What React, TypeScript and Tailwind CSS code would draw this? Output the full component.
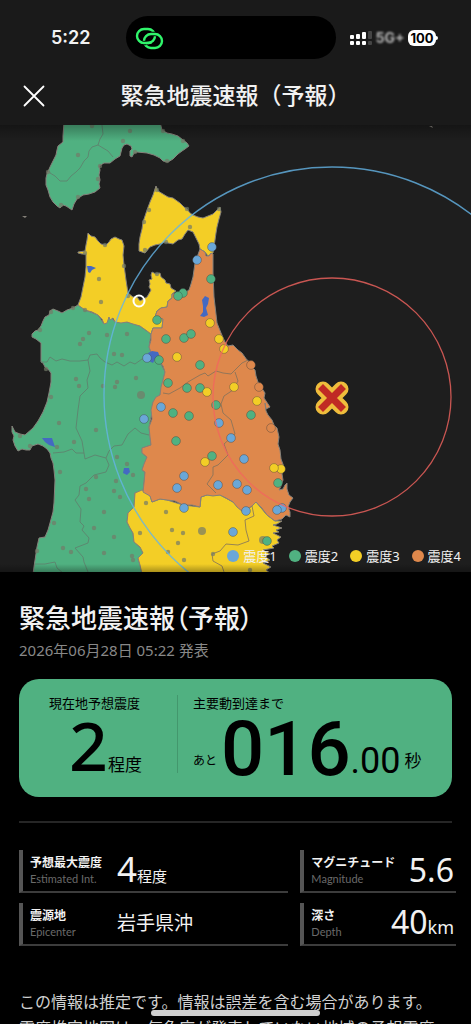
import * as React from "react"
import { clsx } from "clsx"

type Point = [number, number]

const COLORS = {
  one: "#6aa7d8",
  two: "#50b181",
  three: "#f3ce26",
  four: "#de884c",
}

const LEGEND = [
  { label: "震度1", dot: "bg-[#6aa7d8]" },
  { label: "震度2", dot: "bg-[#50b181]" },
  { label: "震度3", dot: "bg-[#f3ce26]" },
  { label: "震度4", dot: "bg-[#de884c]" },
]

// Coordinates share one space: x 0-471, y 125-572
const HOKKAIDO =
  "M64 122L63 136L63 142L58 146L57 150L56 155L53 161L50 167L47 174L46 178L46 185L48 190L50 197L53 202L57 206L60 208L63 205L66 206L69 208L72 210L74 204L77 199L83 195L89 194L95 192L100 188L99 184L100 180L99 175L100 170L99 166L104 163L110 163L115 159L120 156L121 152L122 148L124 145L127 144L131 146L132 149L130 151L130 156L132 157L134 153L137 152L147 153L154 155L160 158L163 161L168 162L173 159L178 154L182 151L185 149L189 146L187 143L183 140L178 136L172 134L167 133L162 130L160 122Z"
const AKITA_YAMAGATA =
  "M32 334L35 331L38 330L41 326L43 321L45 317L49 315L50 311L53 309L58 311L62 313L67 310L73 308L78 305L85 310L98 315L104 324L110 317L115 322L127 322L140 326L151 334L149 347L152 355L160 362L165 372L163 380L160 395L153 402L152 412L149 427L151 445L142 448L142 453L147 457L142 470L145 472L143 492L135 493L134 507L128 513L127 522L130 528L133 533L134 542L140 547L143 553L138 558L140 565L142 574L33 574L34 567L37 547L39 538L45 537L48 530L50 523L53 512L54 503L55 480L54 470L53 463L51 458L50 453L47 449L43 446L38 444L32 446L30 450L26 450L22 449L18 451L15 446L13 440L14 436L12 432L12 426L15 432L20 434L25 435L33 428L38 421L43 412L47 402L49 393L51 382L51 373L48 369L45 367L43 363L41 362L41 352L41 343L36 339L32 337Z"
const TSUGARU =
  "M78 305L81 297L83 287L85 277L86 267L86 254L82 254L78 253L78 252L85 251L86 245L87 240L88 233L91 236L95 237L98 241L101 244L106 245L109 242L111 239L115 237L119 239L122 240L124 246L123 255L124 265L126 280L128 293L133 297L137 297L140 301L147 297L151 290L149 287L150 284L149 280L152 279L151 275L152 272L156 274L160 273L161 277L165 280L166 283L170 284L171 288L176 291L172 294L172 298L168 301L167 307L161 308L157 311L155 317L163 319L162 328L153 328L151 334L147 331L140 326L133 324L127 322L121 323L115 322L113 318L110 320L109 317L107 323L104 324L102 319L98 315L92 312L85 310Z"
const SHIMOKITA =
  "M156 186L158 191L163 194L168 197L173 198L180 203L184 207L187 209L190 213L193 215L198 217L203 218L208 216L213 214L217 210L220 207L221 212L219 219L217 227L216 233L215 240L213 253L208 256L205 252L200 249L199 244L197 240L195 236L193 232L188 230L185 234L182 239L178 240L173 244L168 243L165 242L160 244L155 245L150 247L145 253L139 251L139 244L140 237L142 229L143 222L145 216L147 210L150 202L153 195Z"
const IWATE =
  "M200 249L205 252L206 256L209 256L211 253L213 254L213 273L214 297L217 323L221 333L225 342L228 346L233 345L238 350L242 353L247 360L250 362L252 367L255 370L256 376L258 382L263 390L265 393L264 398L270 407L266 409L265 403L266 411L268 415L272 420L274 425L277 428L279 437L278 444L280 450L281 459L284 467L282 474L283 480L281 486L279 490L283 489L285 485L287 483L287 489L289 495L293 498L290 502L288 507L290 512L290 517L286 515L282 519L275 521L267 515L261 507L256 502L252 506L249 508L243 512L237 507L233 502L226 498L220 495L213 496L207 495L201 497L200 507L192 505L183 505L175 501L167 500L160 499L152 502L150 496L143 492L144 483L145 472L142 470L144 464L147 457L142 453L142 448L151 445L150 437L149 427L152 419L151 410L153 402L156 397L160 395L161 387L163 380L165 372L163 366L160 362L157 357L152 355L149 347L151 340L151 334L153 328L162 328L163 319L155 317L157 311L161 308L167 307L168 301L172 298L172 294L177 293L183 294L189 290L191 284L193 277L195 263Z"
const MIYAGI =
  "M142 490L146 492L149 492L152 502L160 499L167 500L183 505L200 507L201 497L207 495L220 495L233 502L243 512L252 506L256 502L267 515L275 521L282 521L277 524L273 525L282 528L276 530L279 532L273 533L281 537L277 540L279 543L272 546L274 548L263 550L270 554L264 556L270 560L263 563L271 567L266 570L271 574L142 574L140 565L138 558L143 553L140 547L134 542L133 533L130 528L127 522L128 513L134 507L135 493Z"

const BORDERS = [
  "M102 125L103 134L100 139L98 145L92 147L89 151L88 157L84 161L80 168L76 172L71 176L67 181L60 181L55 176L50 173L49 171",
  "M98 145L103 148L108 151L113 157",
  "M41 362L47 362L50 357L56 361L62 359L70 361L80 361L88 360L90 355L97 354L100 358L105 362L112 365L117 362L124 366L130 362L135 364L142 359L149 358",
  "M88 360L90 371L87 380L88 388L80 396L78 410L76 428L82 441L85 459L95 455L106 458L109 451L114 446L122 445L128 434L135 428L141 433L149 435",
  "M53 453L64 452L72 449L76 453L84 453",
  "M106 458L109 465L106 472L94 475L86 483L80 486L79 495L75 500L81 509L80 522L84 526L82 530L89 538L88 543L75 548L83 557L84 562L88 572",
  "M34 564L45 564L55 562L57 568L63 573",
]

const INLAND_BORDERS = [
  "M163 393L169 394L180 388L188 382L200 375L205 373L208 376L216 371L223 373L231 374L235 370L242 363L248 360",
  "M235 372L238 381L233 390L224 396L221 404L223 413L231 420L235 434L224 444L228 455L218 465L213 467L213 475L207 484L216 493",
  "M252 506L254 516L245 520L246 530L249 541L238 545L226 544L220 551L212 554L213 561L222 566L224 572",
]

const LAKES = [
  "M205 296L209 298L208 304L206 308L208 315L204 317L200 316L203 312L203 306L202 300Z",
  "M87 266L91 266L96 268L92 270L90 273L88 272Z",
  "M148 353L152 351L158 352L160 357L155 359L153 363L149 361Z",
  "M42 438L52 438L55 447L49 445L45 442Z",
  "M124 468L129 468L130 472L127 475L123 473Z",
]

const STATIONS: { fill: string; points: Point[] }[] = [
  {
    fill: COLORS.two,
    points: [
      [211, 279], [183, 293], [178, 296], [157, 320], [166, 339], [184, 338], [191, 334],
      [159, 360], [200, 365], [168, 383], [187, 388], [200, 388], [216, 405], [173, 413],
      [189, 416], [176, 441], [212, 456], [251, 415], [278, 483], [267, 541],
    ],
  },
  {
    fill: COLORS.one,
    points: [
      [212, 247], [197, 260], [147, 358], [161, 407], [144, 419], [219, 423], [231, 438],
      [244, 459], [184, 476], [177, 488], [218, 485], [237, 484], [247, 490], [184, 508],
      [246, 511], [282, 508], [277, 510], [233, 532],
    ],
  },
  {
    fill: COLORS.three,
    points: [
      [210, 323], [219, 339], [224, 349], [177, 357], [207, 392], [234, 387], [257, 401],
      [205, 462], [281, 469], [274, 468],
    ],
  },
  { fill: COLORS.four, points: [[251, 365], [259, 387], [271, 428]] },
]

const QUIET_STATIONS: Point[] = [
  [92, 126], [130, 131], [123, 141], [78, 155], [48, 172], [100, 166], [98, 179], [78, 197],
  [61, 205], [163, 131], [183, 141], [135, 152], [167, 161], [149, 210], [144, 222],
  [187, 209], [190, 227], [166, 242], [145, 250], [157, 190], [219, 209], [105, 245],
  [85, 253], [124, 266], [99, 279], [101, 302], [128, 296], [157, 274], [85, 310],
  [73, 308], [51, 312], [40, 330], [89, 333], [83, 339], [80, 344], [107, 335], [127, 334],
  [114, 354], [122, 355], [76, 379], [79, 386], [117, 382], [115, 387], [103, 386],
  [136, 378], [51, 397], [59, 423], [96, 430], [74, 442], [57, 447], [20, 436], [30, 446],
  [117, 457], [127, 464], [133, 475], [116, 481], [60, 472], [96, 477], [86, 489], [89, 499],
  [114, 491], [120, 497], [104, 512], [54, 523], [94, 528], [114, 537], [63, 548], [71, 552],
  [104, 553], [132, 556], [133, 560], [146, 503], [166, 512], [172, 530], [183, 533],
  [178, 543], [140, 533], [168, 552], [184, 560], [37, 551], [46, 369], [213, 554], [250, 570],
]

function Region({ d, fill }: { d: string; fill: string }) {
  return <path d={d} fill={fill} stroke="#85817a" strokeWidth="1" strokeLinejoin="round" />
}

function QuakeMap() {
  return (
    <svg
      role="img"
      aria-label="震度分布"
      viewBox="0 125 471 447"
      className="block w-full bg-[#1e1e1e]"
    >
      <defs>
        <linearGradient id="top-shade" x1="0" y1="0" x2="0" y2="1">
          <stop offset="0" stopColor="#000" stopOpacity="0.3" />
          <stop offset="1" stopColor="#000" stopOpacity="0" />
        </linearGradient>
      </defs>
      <Region d={HOKKAIDO} fill={COLORS.two} />
      <Region d={AKITA_YAMAGATA} fill={COLORS.two} />
      <Region d={TSUGARU} fill={COLORS.three} />
      <Region d={SHIMOKITA} fill={COLORS.three} />
      <Region d={MIYAGI} fill={COLORS.three} />
      <Region d={IWATE} fill={COLORS.four} />
      <path d="M22 216h5l-2 2z M429 126l3 0l1 2z" fill="#85817a" />

      <g fill="none" strokeLinejoin="round" strokeWidth="0.8">
        {BORDERS.map((d) => (
          <path key={d} d={d} stroke="#5f7d6c" />
        ))}
        {INLAND_BORDERS.map((d) => (
          <path key={d} d={d} stroke="#80715c" />
        ))}
      </g>
      {LAKES.map((d) => (
        <path key={d} d={d} fill="#4469c2" />
      ))}

      <g fill="#747b68" fillOpacity="0.7">
        {QUIET_STATIONS.map(([x, y]) => (
          <circle key={`${x}-${y}`} cx={x} cy={y} r="2.2" />
        ))}
        <circle cx="141" cy="395" r="4" />
        <circle cx="202" cy="531" r="4" />
        <circle cx="263" cy="540" r="4" />
      </g>
      {STATIONS.map(({ fill, points }) => (
        <g key={fill} fill={fill} stroke="#3c3c3c" strokeOpacity="0.55" strokeWidth="0.7">
          {points.map(([x, y]) => (
            <circle key={`${x}-${y}`} cx={x} cy={y} r="4.4" />
          ))}
        </g>
      ))}

      {/* P and S wave fronts */}
      <circle cx="332" cy="395" r="228" fill="none" stroke="#64b4e6" strokeOpacity="0.8" strokeWidth="1.4" />
      <circle cx="332" cy="397" r="119" fill="none" stroke="#f4645f" strokeOpacity="0.8" strokeWidth="1.3" />

      {/* epicenter */}
      <g strokeLinecap="round" fill="none">
        <path d="M323 389L341 407M341 389L323 407" stroke="#efbd3c" strokeWidth="15" />
        <path d="M323 389L341 407M341 389L323 407" stroke="#c02a24" strokeWidth="7" strokeLinecap="square" />
      </g>

      {/* current location */}
      <circle cx="139" cy="301" r="5.5" fill="none" stroke="#fff" strokeWidth="2" />
      <rect x="0" y="125" width="471" height="16" fill="url(#top-shade)" />
    </svg>
  )
}

function StatusBar() {
  return (
    <div className="grid grid-cols-[1fr_210px_1fr] items-center pt-4 pr-2.5">
      <time className="pl-4 text-center font-['Inter',sans-serif] text-[18px] leading-6 font-semibold">
        5:22
      </time>
      <div className="flex h-[43px] items-center rounded-full bg-black pl-2">
        <svg viewBox="0 0 30 26" className="h-[26px] w-[30px]" fill="none">
          <rect x="3" y="4" width="18" height="14" rx="7" stroke="#30f56b" strokeWidth="2.4" />
          <rect x="10" y="9" width="18" height="14" rx="7" stroke="#000" strokeWidth="4.4" />
          <rect x="10" y="9" width="18" height="14" rx="7" stroke="#30f56b" strokeWidth="2.4" />
          <path d="M8.500 18H12.500" stroke="#000" strokeWidth="4.4" />
          <path d="M6 16.700C7 17.600 8.500 18 10 18H14C15.500 18 16.500 17.700 17.500 17.100" stroke="#30f56b" strokeWidth="2.4" />
        </svg>
      </div>
      <div className="flex items-center gap-1 pl-3.5">
        <svg viewBox="0 0 22 16" className="h-4 w-[22px]" fill="#fff">
          <rect x="0" y="5" width="4" height="4" rx="1" />
          <rect x="6" y="4" width="4" height="5" rx="1" />
          <rect x="12" y="2" width="4" height="7" rx="1" />
          <rect x="0" y="11" width="4" height="4" rx="1" />
          <rect x="6" y="11" width="4" height="4" rx="1" />
          <rect x="12" y="11" width="4" height="4" rx="1" />
          <rect x="18" y="1" width="4" height="8" rx="1" fill="#444" />
          <rect x="18" y="11" width="4" height="4" rx="1" fill="#444" />
        </svg>
        <span className="font-['Inter',sans-serif] text-sm font-bold text-[#b4b4b4] blur-[1px]">5G+</span>
        <span className="relative rounded-md bg-white px-0.5 font-['Inter',sans-serif] text-[13px] leading-4 font-bold text-black">
          100
          <span className="absolute top-1.5 -right-0.5 h-1 w-0.5 rounded-r bg-white" />
        </span>
      </div>
    </div>
  )
}

function Countdown() {
  return (
    <div className="mt-2.5 flex items-end">
      <span className="mb-2 text-[12px] leading-4">あと</span>
      <span className="ml-1 font-['Roboto',sans-serif] text-[76px] leading-[56px] font-medium">016</span>
      <span className="font-['Roboto',sans-serif] text-[36px] leading-8">.00</span>
      <span className="mb-1 ml-1 text-[17px] leading-6">秒</span>
    </div>
  )
}

interface FactProps {
  label: string
  sub: string
  right?: boolean
  children: React.ReactNode
}

function Fact({ label, sub, right, children }: FactProps) {
  return (
    <div className="flex h-[43px] items-center border-b-2 border-l-4 border-b-[#3c3c3c] border-l-[#555] pl-[7px]">
      <dt className={clsx("shrink-0 whitespace-nowrap", !right && "w-[87px]")}>
        <span className="block text-[12px] leading-4 font-bold">{label}</span>
        <span className="block font-['Lato',sans-serif] text-[11px] leading-4 text-[#6a6a6a]">{sub}</span>
      </dt>
      <dd className={clsx("whitespace-nowrap", right && "ml-auto pr-0.5")}>{children}</dd>
    </div>
  )
}

export default function App() {
  return (
    <div
      lang="ja"
      className="relative flex h-screen flex-col overflow-hidden bg-black font-['Noto_Sans','Noto_Sans_CJK_JP',sans-serif] text-[#f2f2f2]"
    >
      <header className="shrink-0 bg-[#1a1a1a]">
        <StatusBar />
        <div className="grid h-[66px] grid-cols-[44px_1fr_44px] items-center px-3 pt-2">
          <button type="button" aria-label="閉じる" className="flex h-11 items-center justify-center">
            <svg viewBox="0 0 22 22" className="size-[22px]" stroke="#fff" strokeWidth="1.8" strokeLinecap="round">
              <path d="M1.500 1.500L20.500 20.500M20.500 1.500L1.500 20.500" />
            </svg>
          </button>
          <h1 className="pb-0.5 text-center text-[23px] font-medium whitespace-nowrap">緊急地震速報（予報）</h1>
        </div>
      </header>

      <section className="relative shrink-0">
        <QuakeMap />
        <div className="absolute inset-x-0 bottom-0 h-2 bg-linear-to-t from-black/30 to-transparent" />
        <ul className="absolute inset-x-0 bottom-0 flex justify-end gap-3 pr-2.5 pb-1.5">
          {LEGEND.map(({ label, dot }) => (
            <li key={label} className="flex items-center gap-1 text-[13px] leading-5">
              <span className={clsx("size-3 rounded-full", dot)} />
              {label}
            </li>
          ))}
        </ul>
      </section>

      <main className="shrink-0 px-[19px] pt-7">
        <h2 className="text-[26px] leading-9 font-medium [font-feature-settings:'palt']">緊急地震速報（予報）</h2>
        <p className="mt-1 text-[15px] leading-5 text-[#888]">2026年06月28日 05:22 発表</p>

        <section className="mt-[19px] flex h-[118px] rounded-[20px] bg-[#50b181] pt-4 pb-6 text-black">
          <div className="w-[159px] shrink-0 border-r border-[#43976d] pl-[30px]">
            <h3 className="text-[13px] leading-4">現在地予想震度</h3>
            <p className="mt-1 flex items-baseline pl-5">
              <span className="text-[68px] leading-[60px] font-medium">2</span>
              <span className="text-[17px] leading-6">程度</span>
            </p>
          </div>
          <div className="pl-[15px]">
            <h3 className="text-[13px] leading-4">主要動到達まで</h3>
            <Countdown />
          </div>
        </section>

        <hr className="mt-6 border-t-2 border-[#262626]" />

        <dl className="-mr-1 mt-[27px] grid grid-cols-[270fr_156fr] gap-x-3 gap-y-2.5">
          <Fact label="予想最大震度" sub="Estimated Int.">
            <span className="text-[35px] leading-8">4</span>
            <span className="text-[15px]">程度</span>
          </Fact>
          <Fact label="マグニチュード" sub="Magnitude" right>
            <span className="text-[32px] leading-8">5.6</span>
          </Fact>
          <Fact label="震源地" sub="Epicenter">
            <span className="text-[19px]">岩手県沖</span>
          </Fact>
          <Fact label="深さ" sub="Depth" right>
            <span className="text-[32px] leading-8">40</span>
            <span className="text-[18px]">km</span>
          </Fact>
        </dl>

        <p className="mt-[43px] text-base leading-[26px] whitespace-nowrap text-[#d0d0d0]">
          この情報は推定です。情報は誤差を含む場合があります。
          <br />
          震度推定地図は、気象庁が発表していない地域の予想震度
        </p>
      </main>

      {/* home indicator */}
      <div className="absolute inset-x-0 bottom-2 flex justify-center">
        <div className="h-1.5 w-[169px] rounded-full bg-[#cfcfcf]" />
      </div>
    </div>
  )
}
